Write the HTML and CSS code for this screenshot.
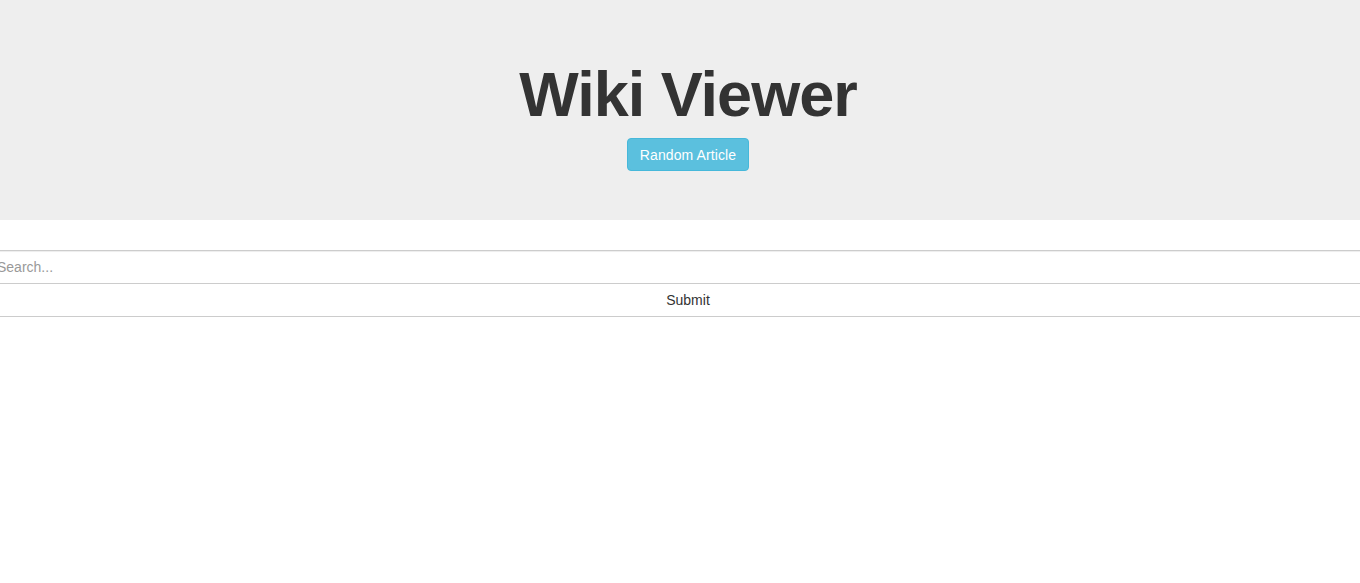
FILE: index.html
```html
<!DOCTYPE html>
<html>
<head>
<meta charset="utf-8">
<title>Wiki Viewer</title>
<link rel="stylesheet" href="styles.css">
</head>
<body>
<div class="page">
  <header class="jumbotron">
    <h1 class="title">Wiki Viewer</h1>
    <button class="btn btn-info" type="button">Random Article</button>
  </header>
  <form class="search">
    <input class="search-input" type="text" placeholder="Search...">
    <button class="btn btn-default btn-block" type="button">Submit</button>
  </form>
</div>
</body>
</html>
```

FILE: styles.css
```css
html, body {
  margin: 0;
  padding: 0;
  overflow-x: hidden;
  background: #fff;
}
body {
  font-family: "Liberation Sans", Arial, sans-serif;
  font-size: 14px;
  color: #333;
}
.page {
  width: 1376px;
}
.jumbotron {
  background: #eee;
  display: flex;
  flex-direction: column;
  align-items: center;
  padding: 60px 0 49px;
  height: 220px;
  box-sizing: border-box;
}
.title {
  margin: 0;
  font-size: 63px;
  line-height: 69px;
  font-weight: 700;
  letter-spacing: -1px;
  color: #333;
}
.btn {
  font-family: "Liberation Sans", Arial, sans-serif;
  font-size: 14px;
  line-height: 20px;
  padding: 6px 12px;
  border-radius: 4px;
  border: 1px solid transparent;
  cursor: pointer;
  box-sizing: border-box;
}
.btn-info {
  margin-top: 9px;
  height: 33px;
  color: #fff;
  background: #5bc0de;
  border-color: #46b8da;
  letter-spacing: 0.1px;
}
.search {
  margin: 30px -16px 0;
  display: flex;
  flex-direction: column;
}
.search-input {
  height: 34px;
  box-sizing: border-box;
  padding: 6px 12px;
  font-family: "Liberation Sans", Arial, sans-serif;
  font-size: 14px;
  color: #555;
  border: 1px solid #ccc;
  border-radius: 4px;
  box-shadow: inset 0 1px 1px rgba(0,0,0,.075);
  outline: none;
}
.search-input::placeholder {
  color: #999;
}
.btn-default {
  color: #333;
  background: #fff;
  border-color: #ccc;
}
.btn-block {
  display: block;
  width: 100%;
  height: 34px;
  margin-top: -1px;
}
```
